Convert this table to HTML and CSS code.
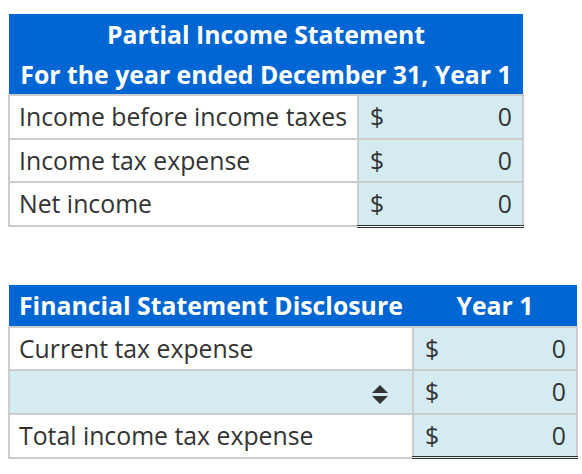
FILE: index.html
```html
<!DOCTYPE html>
<html>
<head>
<meta charset="utf-8">
<link rel="stylesheet" href="styles.css">
</head>
<body>
<table class="tbl t1">
  <colgroup><col class="c1a"><col class="c1b"></colgroup>
  <thead>
    <tr><th colspan="2" class="hd">Partial Income Statement</th></tr>
    <tr><th colspan="2" class="hd">For the year ended December 31, Year 1</th></tr>
  </thead>
  <tbody>
    <tr><td class="lbl">Income before income taxes</td><td class="val"><span class="cur">$</span><span class="num">0</span></td></tr>
    <tr><td class="lbl">Income tax expense</td><td class="val"><span class="cur">$</span><span class="num">0</span></td></tr>
    <tr><td class="lbl">Net income</td><td class="val total"><span class="cur">$</span><span class="num">0</span></td></tr>
  </tbody>
</table>

<table class="tbl t2">
  <colgroup><col class="c2a"><col class="c2b"></colgroup>
  <thead>
    <tr><th class="hd left">Financial Statement Disclosure</th><th class="hd">Year 1</th></tr>
  </thead>
  <tbody>
    <tr><td class="lbl">Current tax expense</td><td class="val"><span class="cur">$</span><span class="num">0</span></td></tr>
    <tr><td class="lbl sel"><span class="arrows"><svg width="16" height="19" viewBox="0 0 16 19"><path d="M8 0 L16 8 L0 8 Z M0 11 L16 11 L8 19 Z" fill="#333"/></svg></span></td><td class="val"><span class="cur">$</span><span class="num">0</span></td></tr>
    <tr><td class="lbl">Total income tax expense</td><td class="val total"><span class="cur">$</span><span class="num">0</span></td></tr>
  </tbody>
</table>
</body>
</html>
```

FILE: styles.css
```css
body {
  margin: 0;
  padding: 14px 0 0 8px;
  font-family: "Open Sans", "Liberation Sans", sans-serif;
  color: #333;
  background: #fff;
}
.tbl {
  border-collapse: collapse;
  table-layout: fixed;
  font-size: 24.8px;
}
.t1 { width: 514px; }
.c1a { width: 349px; }
.c1b { width: 165px; }
.t2 { width: 568px; margin-top: 57px; }
.c2a { width: 404px; }
.c2b { width: 164px; }
.hd {
  background: #0066d4;
  color: #fff;
  font-weight: 700;
  height: 40px;
  padding: 0 10px;
  text-align: center;
  line-height: 40px;
  white-space: nowrap;
}
.t2 .hd { height: 41px; line-height: 41px; }
.hd.left { text-align: left; }
td {
  border: 2px solid #cccccc;
  height: 41.5px;
  padding: 0 10px 0 9px;
  line-height: 41.5px;
}
.lbl { white-space: nowrap; overflow: hidden; }
.val {
  background: #d4ebf2;
  white-space: nowrap;
  padding-left: 11px;
}
.cur { float: left; }
.num { float: right; }
.val.total {
  border-top: 2px solid #000;
  border-bottom: 3px double #333;
}
.sel {
  background: #d4ebf2;
  text-align: right;
  padding-right: 24px;
}
.arrows { display: inline-block; vertical-align: middle; line-height: 0; }
```
